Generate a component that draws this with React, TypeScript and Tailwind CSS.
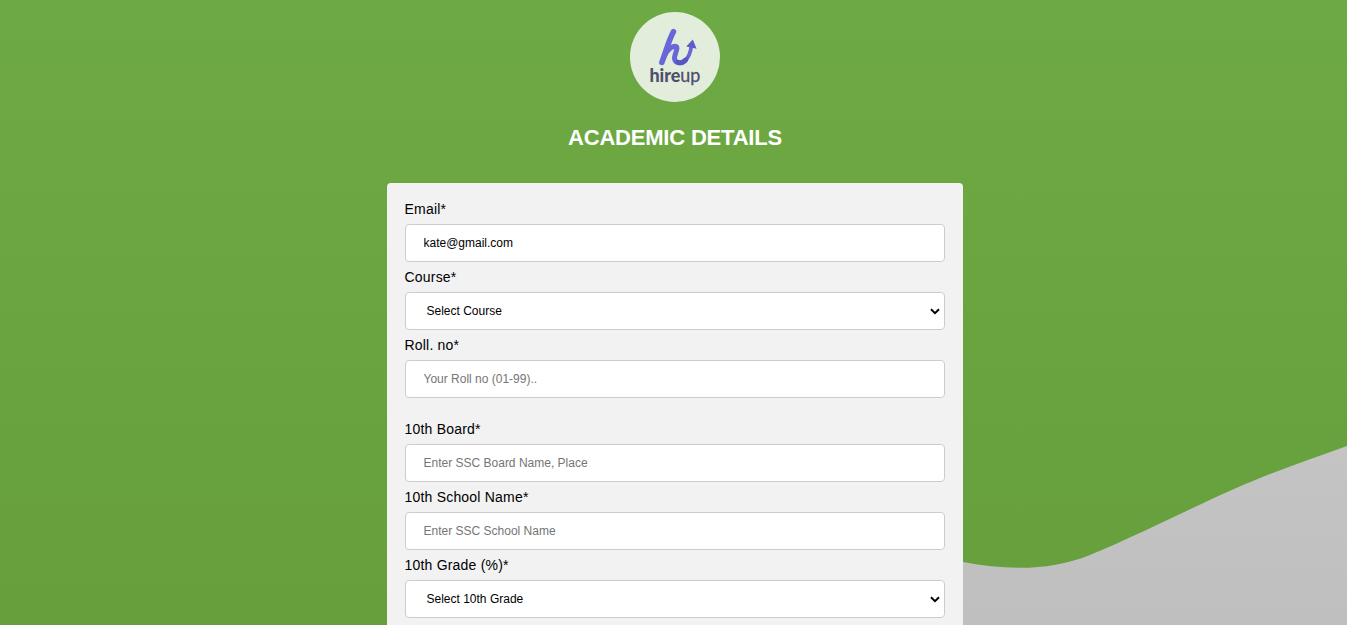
import React from "react";

type FieldProps = {
  id: string;
  label: string;
  value?: string;
  placeholder?: string;
};

const control =
  "block h-[38px] w-full rounded-[4px] border border-[#cccccc] bg-white text-[12px] text-black outline-none";

function Label({ id, label }: { id: string; label: string }) {
  return (
    <label
      htmlFor={id}
      className="-ml-[0.5px] flex h-[30px] items-center text-[14px] leading-4 tracking-[0.2px] text-black"
    >
      {label}
    </label>
  );
}

function TextField({ id, label, value, placeholder }: FieldProps) {
  return (
    <div>
      <Label id={id} label={label} />
      <input
        id={id}
        type="text"
        defaultValue={value}
        placeholder={placeholder}
        className={`${control} px-[17.5px] placeholder:text-[#757575]`}
      />
    </div>
  );
}

function SelectField({ id, label, placeholder }: FieldProps) {
  return (
    <div>
      <Label id={id} label={label} />
      <div className="relative">
        <select id={id} className={`${control} appearance-none px-[20.5px]`}>
          <option>{placeholder}</option>
        </select>
        <svg
          className="pointer-events-none absolute right-[5px] top-[16px]"
          width="10"
          height="7"
          viewBox="0 0 10 7"
          fill="none"
          stroke="#000"
          strokeWidth="2"
        >
          <path d="M1 1.2 5 5.2 9 1.2" />
        </svg>
      </div>
    </div>
  );
}

function Logo() {
  return (
    <svg width="90" height="90" viewBox="0 0 90 90" role="img" aria-label="hireup">
      <circle cx="45" cy="45" r="45" fill="#e2eedb" />
      <g fill="none" stroke="#6866d8" strokeLinecap="round" strokeLinejoin="round">
        <path d="M43.4 19.8 C39 28 36 39 31.9 50.4" strokeWidth="5.6" />
        <path d="M34 45 C37 37.5 42.5 33.8 45.6 34.4 C49.4 35.2 43.6 43 44.6 47.2 C45.6 51.6 51.6 51.8 55 48.6" strokeWidth="5" />
        <path d="M55 48.6 C58.8 45.4 60.6 40 61.4 34" strokeWidth="3.8" strokeLinecap="butt" />
        <path d="M47.5 50.2 C50.5 51.6 53.5 50.4 56 47.6" strokeWidth="4.6" stroke="#5856c0" />
      </g>
      <path d="M62.8 27.4 56.2 34.6 66.6 36.8Z" fill="#5f5dca" />
      <text
        x="19.4"
        y="69.5"
        fontSize="18.5"
        fill="#504f6c"
        fontFamily="Lato, sans-serif"
        textLength="51"
        lengthAdjust="spacingAndGlyphs"
      >
        <tspan fontWeight="900">hire</tspan>
        <tspan stroke="#504f6c" strokeWidth="0.3">up</tspan>
      </text>
    </svg>
  );
}

export default function App() {
  return (
    <main className="relative h-[625px] overflow-hidden bg-linear-to-b from-[#6eaa43] to-[#669f3c] font-['Liberation_Sans',Arial,sans-serif]">
      <svg
        className="absolute bottom-0 right-0"
        width="407"
        height="195"
        viewBox="940 430 407 195"
        aria-hidden="true"
      >
        <defs>
          <linearGradient id="hill" x1="0" y1="0" x2="0" y2="1">
            <stop offset="0" stopColor="#c4c4c4" />
            <stop offset="1" stopColor="#bfbfbf" />
          </linearGradient>
        </defs>
        <path
          d="M940 556 C950 559 956 560.7 963 562 C1009 570.5 1050 571 1090 555 C1131 538.5 1199 504 1243 485 C1280 469 1312 459 1347 446 V625 H940Z"
          fill="url(#hill)"
        />
      </svg>

      <div className="relative flex flex-col items-center pl-[3px] pt-3">
        <Logo />
        <h1 className="mt-[23px] text-[22px] font-bold leading-[26px] tracking-[-0.2px] text-white">
          ACADEMIC DETAILS
        </h1>
        <form className="mt-8 w-[576px] rounded-[4px] bg-[#f2f2f2] px-[18px] pb-5 pt-[11px]">
          <TextField id="email" label="Email*" value="kate@gmail.com" />
          <SelectField id="course" label="Course*" placeholder="Select Course" />
          <TextField id="roll" label="Roll. no*" placeholder="Your Roll no (01-99).." />
          <div className="pt-4">
            <TextField id="board" label="10th Board*" placeholder="Enter SSC Board Name, Place" />
          </div>
          <TextField id="school" label="10th School Name*" placeholder="Enter SSC School Name" />
          <SelectField id="grade" label="10th Grade (%)*" placeholder="Select 10th Grade" />
        </form>
      </div>
    </main>
  );
}
